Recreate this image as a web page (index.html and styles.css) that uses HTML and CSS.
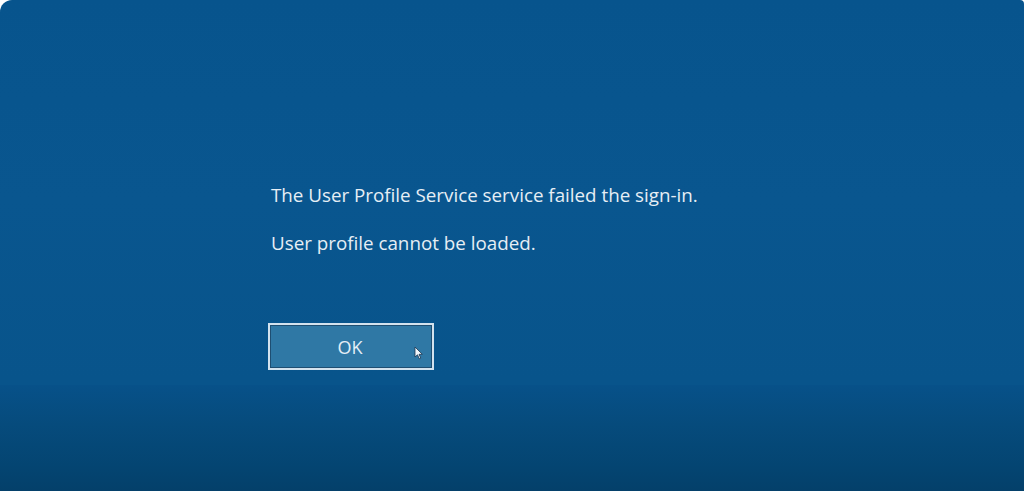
FILE: index.html
```html
<!DOCTYPE html>
<html>
<head>
<meta charset="utf-8">
<link rel="stylesheet" href="styles.css">
</head>
<body>
<div class="screen">
  <div class="dialog">
    <p class="msg">The User Profile Service service failed the sign-in.</p>
    <p class="msg second">User profile cannot be loaded.</p>
    <div class="btnwrap">
      <div class="btn">OK</div>
      <svg class="cursor" width="10" height="14" viewBox="0 0 10 14"><path d="M1 1 L1 11 L3.5 8.8 L5.3 12.8 L6.8 12.1 L5 8.3 L8.3 8.3 Z" fill="#f2f6fa" stroke="#1a3550" stroke-width="0.8"/></svg>
    </div>
  </div>
  <div class="bottom"></div>
</div>
</body>
</html>
```
FILE: styles.css
```css
html, body { margin: 0; padding: 0; background: #ffffff; }
.screen {
  width: 1024px;
  height: 491px;
  border-top-left-radius: 12px;
  border-top-right-radius: 4px;
  overflow: hidden;
  background: linear-gradient(to bottom, #07548d 0px, #09568f 200px, #08548b 380px);
  display: flex;
  flex-direction: column;
  font-family: "Open Sans", "Noto Sans", sans-serif;
}
.dialog {
  height: 385px;
  box-sizing: border-box;
  padding: 183px 0 0 271px;
}
.msg {
  margin: 0;
  color: #e6eef5;
  font-size: 18.8px;
  line-height: 24px;
}
.second { margin-top: 24px; }
.btnwrap {
  margin-top: 68px;
  margin-left: -3px;
  position: relative;
  width: 166px;
}
.btn {
  width: 166px;
  height: 47px;
  box-sizing: border-box;
  border: 2px solid #d3e2ee;
  box-shadow: inset 0 0 0 1px #1e4e72;
  background: #2f78a5;
  color: #e4eef6;
  font-size: 18px;
  display: flex;
  align-items: center;
  justify-content: center;
  padding-right: 2px;
}
.cursor { position: absolute; left: 146px; top: 23px; }
.bottom {
  flex: 1;
  background: linear-gradient(to bottom, #075189 0px, #064b7c 40px, #044572 80px, #04406a 106px);
}
```
